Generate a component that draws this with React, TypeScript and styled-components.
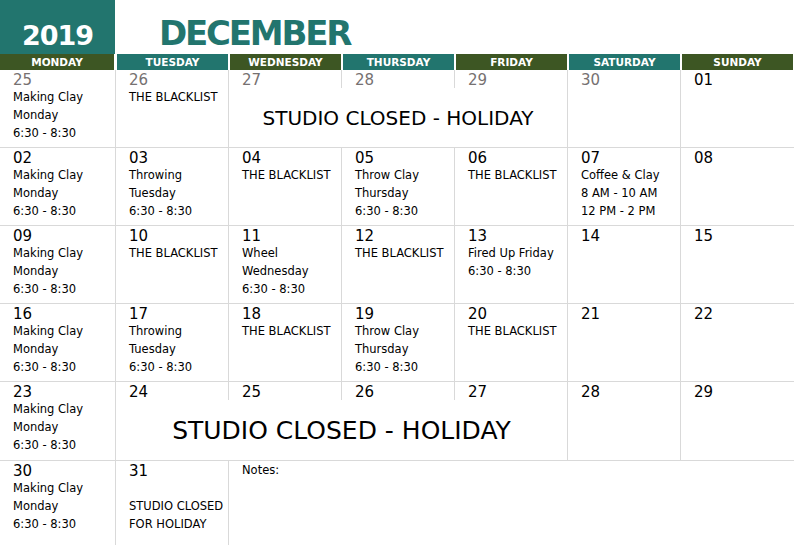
import React from "react";
import styled, { createGlobalStyle } from "styled-components";

const TEAL = "#22756e";
const OLIVE = "#3d5623";
const LINE = "#d9d9d9";
const FONT = `"DejaVu Sans", "Liberation Sans", sans-serif`;

const GlobalStyle = createGlobalStyle`
  html, body { margin: 0; padding: 0; background: #fff; }
  body { font-family: ${FONT}; color: #000; }
`;

const COLS = "116px repeat(6, 113px)";

interface Day {
  date: string;
  muted?: boolean;
  lines?: string[];
}

interface Week {
  days: Day[];
  banner?: { from: number; to: number; big?: boolean };
  notes?: boolean;
}

const clay = ["Making Clay", "Monday", "6:30 - 8:30"];
const black = ["THE BLACKLIST"];

const weeks: Week[] = [
  {
    days: [
      { date: "25", muted: true, lines: clay },
      { date: "26", muted: true, lines: black },
      { date: "27", muted: true },
      { date: "28", muted: true },
      { date: "29", muted: true },
      { date: "30", muted: true },
      { date: "01" },
    ],
    banner: { from: 3, to: 5 },
  },
  {
    days: [
      { date: "02", lines: clay },
      { date: "03", lines: ["Throwing", "Tuesday", "6:30 - 8:30"] },
      { date: "04", lines: black },
      { date: "05", lines: ["Throw Clay", "Thursday", "6:30 - 8:30"] },
      { date: "06", lines: black },
      { date: "07", lines: ["Coffee & Clay", "8 AM - 10 AM", "12 PM - 2 PM"] },
      { date: "08" },
    ],
  },
  {
    days: [
      { date: "09", lines: clay },
      { date: "10", lines: black },
      { date: "11", lines: ["Wheel", "Wednesday", "6:30 - 8:30"] },
      { date: "12", lines: black },
      { date: "13", lines: ["Fired Up Friday", "6:30 - 8:30"] },
      { date: "14" },
      { date: "15" },
    ],
  },
  {
    days: [
      { date: "16", lines: clay },
      { date: "17", lines: ["Throwing", "Tuesday", "6:30 - 8:30"] },
      { date: "18", lines: black },
      { date: "19", lines: ["Throw Clay", "Thursday", "6:30 - 8:30"] },
      { date: "20", lines: black },
      { date: "21" },
      { date: "22" },
    ],
  },
  {
    days: [
      { date: "23", lines: clay },
      { date: "24" },
      { date: "25" },
      { date: "26" },
      { date: "27" },
      { date: "28" },
      { date: "29" },
    ],
    banner: { from: 2, to: 5, big: true },
  },
  {
    days: [
      { date: "30", lines: clay },
      { date: "31", lines: ["\u00a0", "STUDIO CLOSED", "FOR HOLIDAY"] },
    ],
    notes: true,
  },
];

const dayNames = ["MONDAY", "TUESDAY", "WEDNESDAY", "THURSDAY", "FRIDAY", "SATURDAY", "SUNDAY"];

const Page = styled.div`
  width: 794px;
  height: 545px;
  overflow: hidden;
  background: #fff;
`;

const TopBar = styled.div`
  display: flex;
  align-items: flex-end;
  height: 54px;
`;

const YearBox = styled.div`
  width: 115px;
  height: 54px;
  background: ${TEAL};
  color: #fff;
  font-weight: bold;
  font-size: 27px;
  letter-spacing: -1px;
  display: flex;
  align-items: flex-end;
  justify-content: center;
  line-height: 1;
  padding-bottom: 5px;
  box-sizing: border-box;
`;

const MonthTitle = styled.div`
  color: ${TEAL};
  font-weight: bold;
  font-size: 34px;
  line-height: 1;
  padding-left: 44px;
  padding-bottom: 4px;
  letter-spacing: -2.2px;
`;

const HeaderRow = styled.div`
  display: grid;
  grid-template-columns: ${COLS};
  height: 16px;
`;

const DayHead = styled.div<{ $alt: boolean; $first: boolean }>`
  background: ${({ $alt }) => ($alt ? TEAL : OLIVE)};
  color: #fff;
  font-weight: bold;
  font-size: 10.5px;
  line-height: 16px;
  text-align: center;
  margin: ${({ $first }) => ($first ? "0 2px 0 0" : "0 1px")};
`;

const WeekRow = styled.div<{ $h: number; $last?: boolean }>`
  display: grid;
  grid-template-columns: ${COLS};
  grid-template-rows: 18px auto;
  height: ${({ $h }) => $h}px;
  border-bottom: ${({ $last }) => ($last ? "none" : `1px solid ${LINE}`)};
`;

const DateCell = styled.div<{ $col: number; $muted?: boolean; $edge: boolean }>`
  grid-row: 1;
  grid-column: ${({ $col }) => $col};
  border-right: ${({ $edge }) => ($edge ? "none" : `1px solid ${LINE}`)};
  padding-left: 13px;
  font-size: 15px;
  line-height: 20px;
  color: ${({ $muted }) => ($muted ? "#767171" : "#000")};
`;

const EventCell = styled.div<{ $col: number; $edge: boolean }>`
  grid-row: 2;
  grid-column: ${({ $col }) => $col};
  border-right: ${({ $edge }) => ($edge ? "none" : `1px solid ${LINE}`)};
  padding-left: 13px;
  font-size: 11.5px;
  line-height: 18px;
  white-space: nowrap;
  overflow: hidden;
`;

const Banner = styled.div<{ $from: number; $to: number; $big?: boolean }>`
  grid-row: 2;
  grid-column: ${({ $from, $to }) => `${$from} / ${$to + 1}`};
  border-right: 1px solid ${LINE};
  display: flex;
  align-items: center;
  justify-content: center;
  font-size: ${({ $big }) => ($big ? "25px" : "20px")};
  padding-top: ${({ $big }) => ($big ? "1px" : "0")};
  white-space: nowrap;
`;

const Notes = styled.div`
  grid-row: 1 / 3;
  grid-column: 3 / 8;
  padding-left: 13px;
  font-size: 11.5px;
  line-height: 18px;
`;

const rowHeights = [77, 77, 77, 77, 78, 84];

export default function App() {
  return (
    <Page>
      <GlobalStyle />
      <TopBar>
        <YearBox>2019</YearBox>
        <MonthTitle>DECEMBER</MonthTitle>
      </TopBar>
      <HeaderRow>
        {dayNames.map((d, i) => (
          <DayHead key={d} $alt={i % 2 === 1} $first={i === 0}>
            {d}
          </DayHead>
        ))}
      </HeaderRow>
      {weeks.map((w, wi) => {
        const inBanner = (c: number) => !!w.banner && c >= w.banner.from && c <= w.banner.to;
        return (
          <WeekRow key={wi} $h={rowHeights[wi]} $last={wi === weeks.length - 1}>
            {w.days.map((d, i) => {
              const col = i + 1;
              return (
                <React.Fragment key={i}>
                  <DateCell $col={col} $muted={d.muted} $edge={col === 7}>
                    {d.date}
                  </DateCell>
                  {!inBanner(col) && (
                    <EventCell $col={col} $edge={col === 7}>
                      {(d.lines || []).map((l, li) => (
                        <div key={li}>{l}</div>
                      ))}
                    </EventCell>
                  )}
                </React.Fragment>
              );
            })}
            {w.banner && (
              <Banner $from={w.banner.from} $to={w.banner.to} $big={w.banner.big}>
                STUDIO CLOSED - HOLIDAY
              </Banner>
            )}
            {w.notes && <Notes>Notes:</Notes>}
          </WeekRow>
        );
      })}
    </Page>
  );
}
